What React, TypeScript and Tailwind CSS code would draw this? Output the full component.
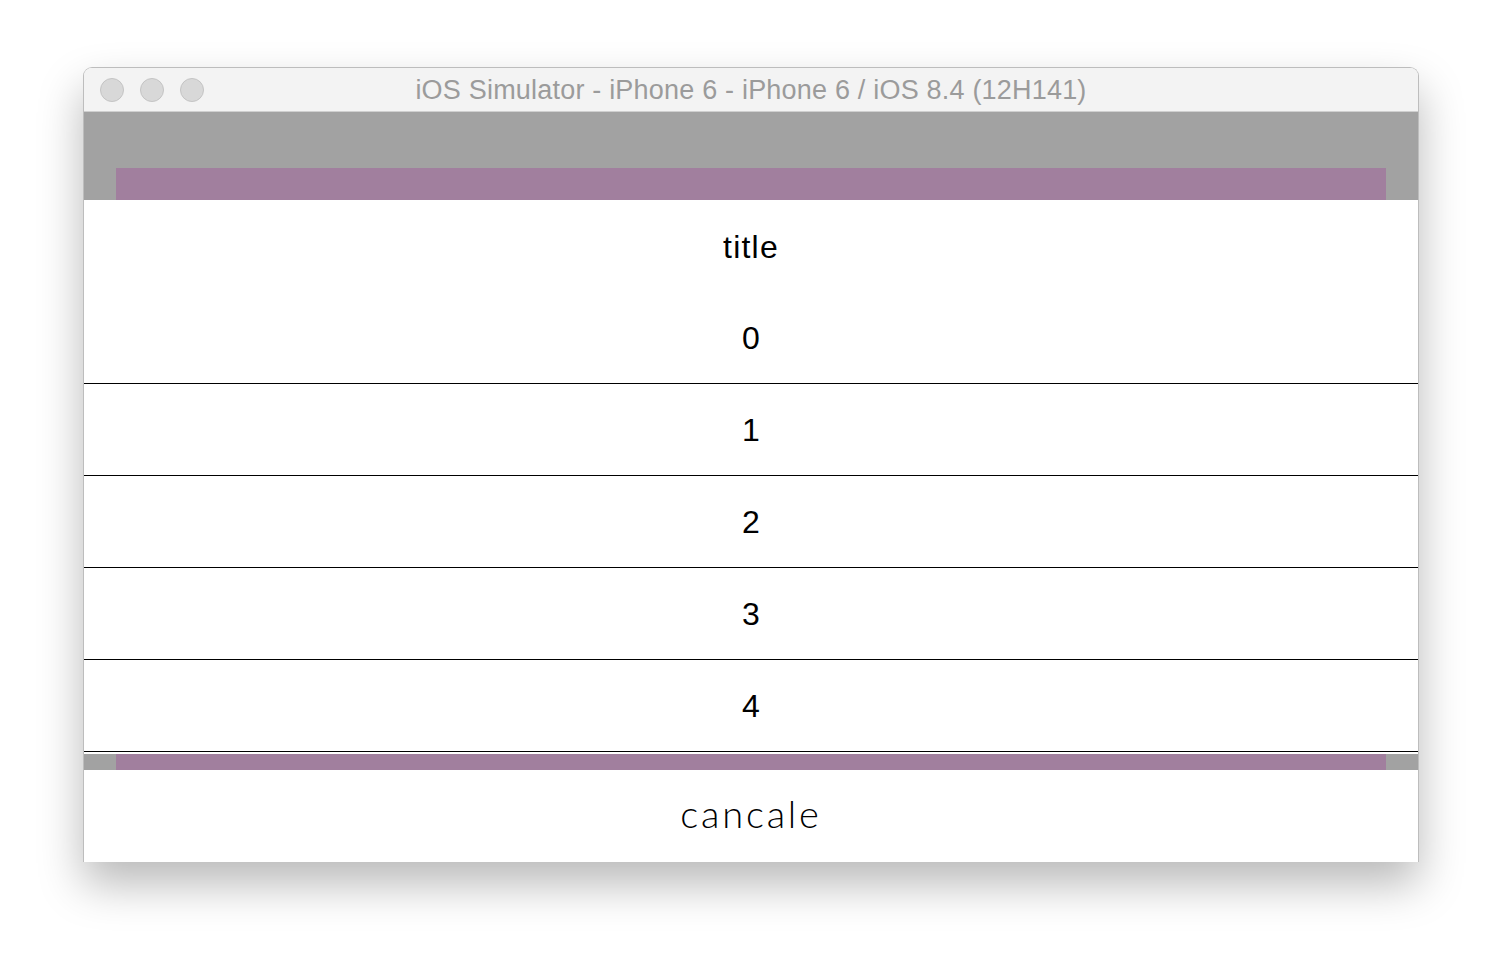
const rows = ['0', '1', '2', '3', '4']

function TrafficLight() {
    return <div className="w-[24px] h-[24px] rounded-full bg-[#d8d8d8] border border-[#c4c4c4]" />
}

export default function App() {
    return (
        <div className="w-[1502px] h-[962px] bg-white pt-[67px] pl-[83px] font-['Liberation_Sans',sans-serif]">
            <div className="w-[1336px] rounded-t-[9px] border border-[#bdbdbd] border-b-0 overflow-hidden shadow-[0_22px_45px_rgba(0,0,0,0.28)]">
                {/* title bar */}
                <div className="h-[44px] bg-[#f3f3f3] border-b border-[#cfcfcf] flex items-center relative">
                    <div className="flex gap-[16px] pl-[16px] pt-[1px]">
                        <TrafficLight />
                        <TrafficLight />
                        <TrafficLight />
                    </div>
                    <div className="absolute inset-0 flex items-center justify-center text-[27px] text-[#9b9b9b] tracking-[0.2px] pt-[2px]">
                        iOS Simulator - iPhone 6 - iPhone 6 / iOS 8.4 (12H141)
                    </div>
                </div>

                {/* screen */}
                <div className="flex flex-col bg-white">
                    <div className="h-[56px] bg-[#a2a2a2]" />
                    <div className="h-[32px] bg-[#a2a2a2] px-[32px]">
                        <div className="h-full bg-[#a17f9e]" />
                    </div>
                    <div className="h-[92px] flex items-center justify-center text-[32px] text-black tracking-[1.2px] pt-[2px]">title</div>
                    {rows.map((r) => (
                        <div key={r} className="h-[92px] flex items-center justify-center text-[32px] text-black border-b border-black pt-[1px]">
                            {r}
                        </div>
                    ))}
                    <div className="h-[2px]" />
                    <div className="h-[16px] bg-[#a2a2a2] px-[32px]">
                        <div className="h-full bg-[#a17f9e]" />
                    </div>
                    <div className="h-[92px] flex items-center justify-center text-[38px] text-black font-['Lato',sans-serif] font-light tracking-[2.8px] pb-[5px]">
                        cancale
                    </div>
                </div>
            </div>
        </div>
    )
}
